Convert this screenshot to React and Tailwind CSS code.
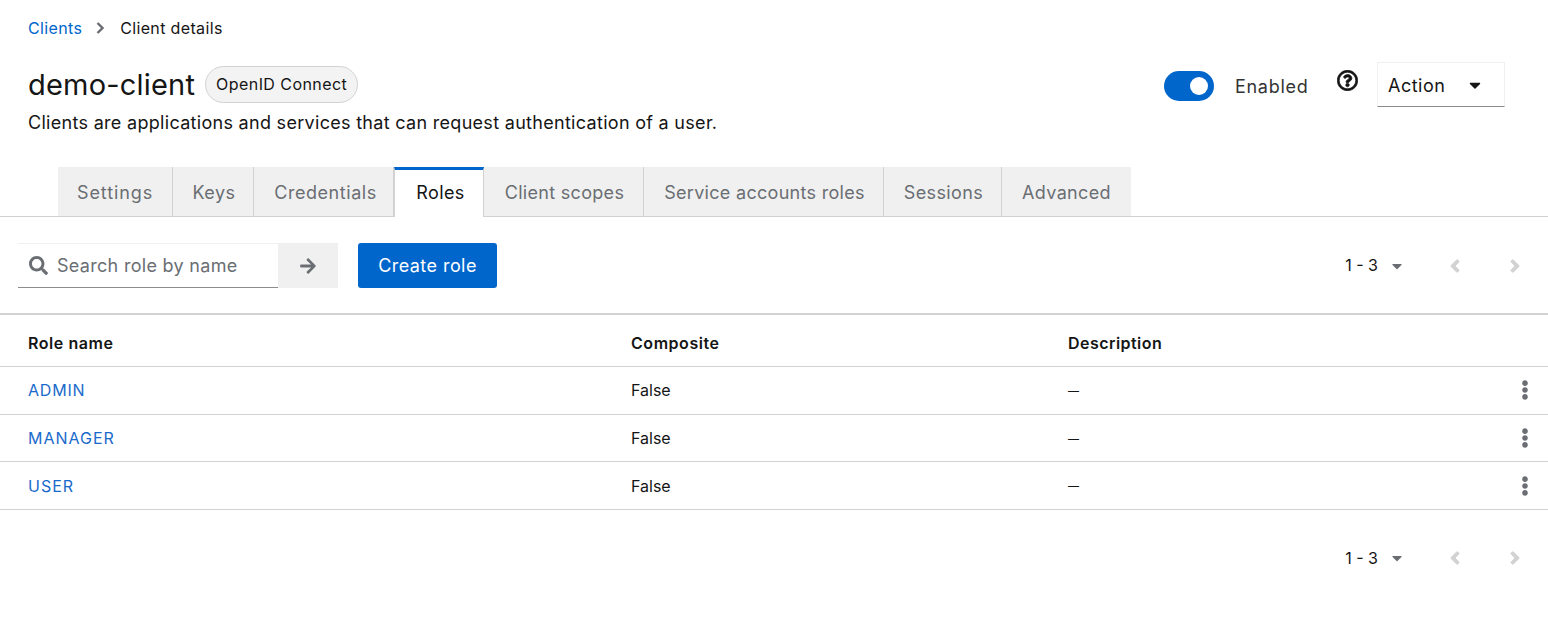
import React from "react";
import { FaSearch, FaArrowRight, FaAngleLeft, FaAngleRight, FaCaretDown, FaEllipsisV, FaRegQuestionCircle } from "react-icons/fa";

const tabs = [
  ["Settings", "w-[115px] tracking-[0.9px]"],
  ["Keys", "w-[81px] tracking-[0.5px] pl-[2px]"],
  ["Credentials", "w-[140px] tracking-[0.55px] pl-[4px]"],
  ["Roles", "w-[90px] tracking-[0.4px] pl-[3px]"],
  ["Client scopes", "w-[160px] tracking-[0.3px] pl-[2px]"],
  ["Service accounts roles", "w-[240px] tracking-[0.3px] pl-[2px]"],
  ["Sessions", "w-[118px] tracking-[0.4px] pl-[2px]"],
  ["Advanced", "w-[129px] tracking-[0.35px]"],
];

function Pager({ className, textClass = "" }) {
  return (
    <div className={"flex items-center " + className}>
      <span className={"text-[16px] text-[#151515] " + textClass}>1 - 3</span>
      <FaCaretDown className="ml-[11px] text-[#6a6e73] text-[16px]" />
      <FaAngleLeft className="ml-[40px] text-[#d2d2d2] text-[20px]" stroke="currentColor" strokeWidth="24" />
      <FaAngleRight className="ml-[40px] mr-[23px] text-[#d2d2d2] text-[20px]" stroke="currentColor" strokeWidth="24" />
    </div>
  );
}

function Row({ name, h, track }) {
  return (
    <div className={"flex items-center border-b border-[#d2d2d2] text-[16px] " + h}>
      <div className={"w-[631px] pl-[28px] text-[#1a6acb] " + track}>{name}</div>
      <div className="w-[437px] text-[#151515]">False</div>
      <div className="flex-1 text-[#151515] text-[22px] font-extralight">–</div>
      <FaEllipsisV className="mr-[13px] text-[#6a6e73] text-[20px]" />
    </div>
  );
}

export default function App() {
  return (
    <div className="w-[1548px] h-[620px] bg-white overflow-hidden font-['Inter',sans-serif] text-[#151515]">
      <div className="flex items-center h-[24px] mt-[16px] ml-[28px] text-[16px] tracking-[0.35px]">
        <span className="text-[#06c]">Clients</span>
        <svg className="ml-[14px] mr-[16px]" width="8" height="12" viewBox="0 0 8 12"><path d="M1.5 1 L6.5 6 L1.5 11" fill="none" stroke="#6a6e73" strokeWidth="2.4" /></svg>
        <span>Client details</span>
      </div>

      <div className="flex items-start mt-[26px] pl-[28px]">
        <div className="flex-1">
          <div className="flex items-center h-[37px]">
            <h1 className="text-[29px] leading-[38px] tracking-[0.2px]">demo-client</h1>
            <span className="ml-[10px] h-[37px] w-[153px] pb-[2px] flex items-center justify-center rounded-full bg-[#f3f3f3] border border-[#d2d2d2] text-[16px] tracking-[0.43px] text-[#151515]">OpenID Connect</span>
          </div>
          <p className="mt-[7px] text-[18px] leading-[26px] tracking-[0.3px]">Clients are applications and services that can request authentication of a user.</p>
        </div>
        <div className="flex items-start mr-[43px] -mt-[4px]">
          <div className="flex items-center mt-[9px] h-[30px]">
            <span className="w-[50px] h-[30px] rounded-full bg-[#06c] flex items-center justify-end pr-[6px]">
              <span className="w-[18px] h-[18px] rounded-full bg-white"></span>
            </span>
            <span className="ml-[21px] w-[72px] text-[18px] tracking-[0.7px] text-[#333]">Enabled</span>
          </div>
          <FaRegQuestionCircle className="ml-[30px] mt-[8px] text-[21px] text-[#151515]" stroke="currentColor" strokeWidth="18" />
          <div className="ml-[19px] w-[128px] h-[45px] flex items-center justify-between pl-[10px] pr-[20px] pt-[1px] border border-[#f0f0f0] border-b-[#8a8d90] text-[18px] tracking-[0.5px]">
            <span>Action</span>
            <FaCaretDown className="text-[18px]" />
          </div>
        </div>
      </div>

      <div className="mt-[31px] flex h-[50px] pl-[58px] border-b border-[#d2d2d2]">
        {tabs.map(([t, w]) => {
          const active = t === "Roles";
          return (
            <div
              key={t}
              className={
                "flex items-center justify-center text-[18px] " + w + " " +
                (active
                  ? "relative z-10 h-[50px] pb-[2px] bg-white border-t-[3px] border-t-[#06c] border-x border-x-[#d2d2d2] text-[#151515]"
                  : "h-[49px] pt-[2px] bg-[#f0f0f0] text-[#6a6e73] border-r border-[#d2d2d2] last:border-r-0")
              }
            >
              {t}
            </div>
          );
        })}
      </div>

      <div className="flex items-center mt-[26px] h-[45px] pl-[18px]">
        <div className="flex items-center w-[260px] h-[45px] border-t border-t-[#f0f0f0] border-b border-b-[#8a8d90] pl-[11px]">
          <FaSearch className="text-[#6a6e73] text-[19px]" />
          <span className="ml-[9px] text-[18px] tracking-[0.3px] text-[#6a6e73]">Search role by name</span>
        </div>
        <div className="w-[60px] h-[45px] bg-[#f0f0f0] flex items-center justify-center">
          <FaArrowRight className="text-[#6a6e73] text-[18px]" />
        </div>
        <div className="ml-[20px] w-[139px] h-[45px] rounded-[3px] bg-[#06c] text-white flex items-center justify-center text-[18px] tracking-[0.45px]">Create role</div>
        <Pager className="ml-auto" textClass="-translate-y-px" />
      </div>

      <div className="mt-[25px] border-t-2 border-[#d2d2d2]">
        <div className="flex items-center h-[52px] pt-[5px] border-b border-[#d2d2d2] text-[16px] font-semibold">
          <div className="w-[631px] pl-[28px] tracking-[0.55px]">Role name</div>
          <div className="w-[437px] tracking-[0.55px]">Composite</div>
          <div className="tracking-[0.45px]">Description</div>
        </div>
        <Row name="ADMIN" h="h-[48px] pb-[1px]" track="tracking-[0.8px]" />
        <Row name="MANAGER" h="h-[47px]" track="tracking-[1px]" />
        <Row name="USER" h="h-[48px]" track="tracking-[1px]" />
      </div>

      <Pager className="justify-end mt-[36px] h-[24px]" />
    </div>
  );
}
